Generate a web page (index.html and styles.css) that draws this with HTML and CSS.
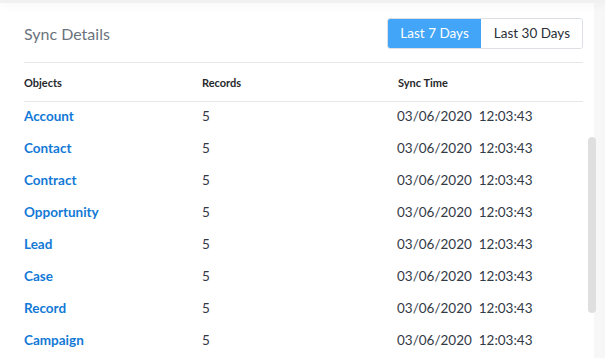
FILE: index.html
```html
<!DOCTYPE html>
<html>
<head>
<meta charset="utf-8">
<link rel="stylesheet" href="styles.css">
</head>
<body>
<div class="topband"></div>
<div class="page">
  <section class="card">
    <header class="card-head">
      <h2 class="title">Sync Details</h2>
      <div class="seg">
        <button class="seg-btn active">Last 7 Days</button>
        <button class="seg-btn">Last 30 Days</button>
      </div>
    </header>
    <div class="table">
      <div class="thead">
        <div>Objects</div><div>Records</div><div>Sync Time</div>
      </div>
      <div class="tbody">
        <div class="row"><a class="obj">Account</a><span>5</span><span class="time">03/06/2020  12:03:43</span></div>
        <div class="row"><a class="obj">Contact</a><span>5</span><span class="time">03/06/2020  12:03:43</span></div>
        <div class="row"><a class="obj">Contract</a><span>5</span><span class="time">03/06/2020  12:03:43</span></div>
        <div class="row"><a class="obj">Opportunity</a><span>5</span><span class="time">03/06/2020  12:03:43</span></div>
        <div class="row"><a class="obj">Lead</a><span>5</span><span class="time">03/06/2020  12:03:43</span></div>
        <div class="row"><a class="obj">Case</a><span>5</span><span class="time">03/06/2020  12:03:43</span></div>
        <div class="row"><a class="obj">Record</a><span>5</span><span class="time">03/06/2020  12:03:43</span></div>
        <div class="row"><a class="obj">Campaign</a><span>5</span><span class="time">03/06/2020  12:03:43</span></div>
      </div>
      <div class="thumb"></div>
    </div>
  </section>
</div>
</body>
</html>
```

FILE: styles.css
```css
* { box-sizing: border-box; }
html, body { margin: 0; padding: 0; }
body {
  background: #f7f7f8;
  font-family: Lato, "Open Sans", sans-serif;
  color: #323a46;
  height: 358px;
  overflow: hidden;
}
.topband {
  height: 3px;
  background: #f1f1f2;
  box-shadow: 0 2px 8px rgba(0,0,0,0.07);
  position: relative;
  z-index: 2;
}
.page { display: flex; }
.card {
  width: 594px;
  background: #fff;
  padding: 0 11px 0 24px;
  height: 355px;
}
.card-head {
  display: flex;
  align-items: center;
  justify-content: space-between;
  height: 60px;
  border-bottom: 1px solid #e6e7e9;
  padding-top: 1px;
}
.title {
  margin: 0;
  font-size: 16px;
  font-weight: 400;
  color: #6b737d;
}
.seg {
  display: flex;
  border: 1px solid #dcdfe3;
  border-radius: 3px;
  overflow: hidden;
  height: 31px;
}
.seg-btn {
  font-family: inherit;
  font-size: 13.5px;
  border: 0;
  background: #fff;
  color: #2a2f36;
  padding: 0 12px 0 13px;
  margin: 0;
}
.seg-btn.active {
  background: #42a5f7;
  color: #fff;
  padding: 0 12px;
}
.table { position: relative; }
.thead {
  display: grid;
  grid-template-columns: 178px 196px 1fr;
  height: 39px;
  align-items: center;
  font-size: 11px;
  font-weight: 700;
  color: #26282c;
  border-bottom: 1px solid #e6e7e9;
}
.row {
  display: grid;
  grid-template-columns: 178px 195px 1fr;
  height: 32px;
  padding-top: 4px;
  line-height: 20px;
  font-size: 13.5px;
}
.obj {
  color: #1379d6;
  font-weight: 700;
  text-decoration: none;
}
.time { white-space: pre; }
.thumb {
  position: absolute;
  left: 564px;
  top: 74px;
  width: 8px;
  height: 176px;
  border-radius: 4px;
  background: #dfdfdf;
}
```
